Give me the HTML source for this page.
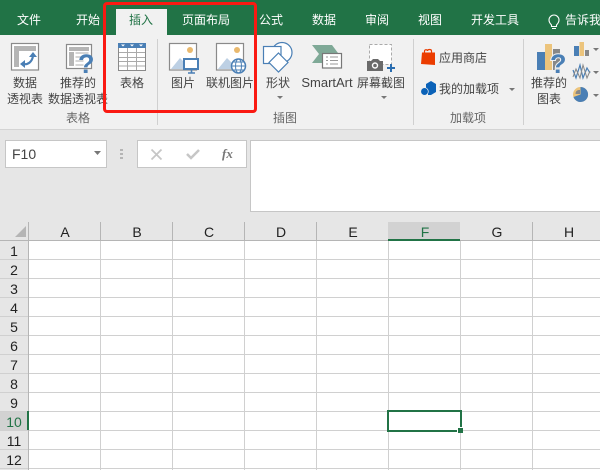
<!DOCTYPE html>
<html><head><meta charset="utf-8">
<style>
html,body{margin:0;padding:0}
body{width:600px;height:470px;overflow:hidden;position:relative;background:#fff;font-family:"Liberation Sans","Noto Sans CJK SC",sans-serif;color:#444}
.a{position:absolute}
.t{position:absolute;white-space:nowrap;font-size:12px;line-height:16px;text-align:center}
.tab{color:#fff;top:12px}
.c{color:#444}
.cap{color:#666}
svg{position:absolute;overflow:visible}
.h{position:absolute;top:224px;height:16px;line-height:16px;width:72px;text-align:center;font-size:14px;color:#222}
.r{position:absolute;left:0;width:28px;text-align:center;font-size:14px;line-height:18px;color:#222}
.q{font-family:"Liberation Sans",sans-serif;font-weight:bold;font-size:27px;fill:#4a7fb5}
</style></head><body>
<div class="a" style="left:0;top:0;width:600px;height:35px;background:#217346"></div>
<div class="a" style="left:0;top:35px;width:600px;height:94px;background:#f1f1f1"></div>
<div class="a" style="left:0;top:129px;width:600px;height:1px;background:#d4d4d4"></div>
<div class="a" style="left:0;top:130px;width:600px;height:110px;background:#e6e6e6"></div>
<div class="a" style="left:116px;top:9px;width:51px;height:26px;background:#f1f1f1"></div>

<div class="t tab" style="left:17px;width:24px">文件</div>
<div class="t tab" style="left:76px;width:24px">开始</div>
<div class="t" style="left:129px;width:24px;top:12px;color:#217346">插入</div>
<div class="t tab" style="left:182px;width:48px">页面布局</div>
<div class="t tab" style="left:259px;width:24px">公式</div>
<div class="t tab" style="left:312px;width:24px">数据</div>
<div class="t tab" style="left:365px;width:24px">审阅</div>
<div class="t tab" style="left:418px;width:24px">视图</div>
<div class="t tab" style="left:471px;width:48px">开发工具</div>
<div class="t tab" style="left:565px;width:48px;text-align:left">告诉我</div>
<svg style="left:548px;top:14px" width="12" height="17" viewBox="0 0 12 17"><path d="M3.500 11C2 9.500 1 8.300 1 6a5 5 0 0 1 10 0c0 2.300-1 3.500-2.500 5V12.500h-5zM4 14.500h4" fill="none" stroke="#fff" stroke-width="1.100"/></svg>

<!-- pivot -->
<svg style="left:11px;top:43px" width="28" height="28" viewBox="0 0 28 28"><rect x=".5" y=".5" width="27" height="26.500" fill="#fff" stroke="#8a8a8a" stroke-width="1.200"/><rect x="3" y="3" width="22" height="5" fill="#b5b5b5"/><rect x="3" y="8" width="5" height="16" fill="#b5b5b5"/><path d="M12 21c5 1 9-2 10-8" fill="none" stroke="#4a7fb5" stroke-width="2.200"/><path d="M18 14l4-5 4 5zM14 17v8l-5-4z" fill="#4a7fb5"/></svg>
<svg style="left:66px;top:44px" width="29" height="30" viewBox="0 0 29 30"><rect x=".5" y=".5" width="25" height="24" fill="#fff" stroke="#8a8a8a" stroke-width="1.200"/><rect x="3" y="3" width="20" height="4" fill="#b5b5b5"/><rect x="3" y="8" width="5" height="14" fill="#b5b5b5"/><path d="M9.500 9h13M9.500 13h10M9.500 17h8M9.500 21h8" stroke="#c8c8c8" stroke-width="1.500"/><text class="q" x="12" y="29">?</text></svg>
<div class="t c" style="left:0;width:50px;top:75px">数据</div>
<div class="t c" style="left:0;width:50px;top:91px">透视表</div>
<div class="t c" style="left:47px;width:62px;top:75px">推荐的</div>
<div class="t c" style="left:47px;width:62px;top:91px">数据透视表</div>
<div class="t cap" style="left:60px;width:36px;top:110px">表格</div>
<div class="a" style="left:157px;top:39px;width:1px;height:86px;background:#d0d0d0"></div>

<!-- table -->
<svg style="left:118px;top:43px" width="28" height="28" viewBox="0 0 28 28"><rect x=".5" y=".5" width="27" height="27" fill="#fff" stroke="#8a8a8a"/><rect x="0" y="0" width="28" height="5" fill="#4a7fb5"/><path d="M3 1.500l2 2 2-2zM12 1.500l2 2 2-2zM21 1.500l2 2 2-2z" fill="#fff"/><path d="M1 9.500h26M1 14.500h26M1 18.500h26M1 23h26M9.500 5v22M18.500 5v22" stroke="#aaa"/></svg>
<div class="t c" style="left:114px;width:36px;top:75px">表格</div>

<!-- picture -->
<svg style="left:169px;top:43px" width="31" height="31" viewBox="0 0 31 31"><rect x=".5" y=".5" width="27" height="26.500" fill="#fff" stroke="#8a8a8a" stroke-width="1.200"/><circle cx="21" cy="7" r="3" fill="#e9b96e"/><path d="M2 26l9-11 7 7 1 4z" fill="#bdd0e4"/><rect x="15" y="16" width="14" height="10" fill="#fff" stroke="#4a7fb5" stroke-width="2"/><path d="M19 30h7M22.500 27v3" stroke="#4a7fb5" stroke-width="1.600"/></svg>
<div class="t c" style="left:165px;width:36px;top:75px">图片</div>
<svg style="left:216px;top:43px" width="31" height="31" viewBox="0 0 31 31"><rect x=".5" y=".5" width="27" height="26.500" fill="#fff" stroke="#8a8a8a" stroke-width="1.200"/><circle cx="21" cy="7" r="3" fill="#e9b96e"/><path d="M2 26l9-11 7 7 1 4z" fill="#bdd0e4"/><circle cx="22.500" cy="23" r="7" fill="#fff" stroke="#4a7fb5" stroke-width="1.500"/><ellipse cx="22.500" cy="23" rx="3" ry="7" fill="none" stroke="#4a7fb5"/><path d="M15.500 23h14M17 19h11M17 27h11" stroke="#4a7fb5"/></svg>
<div class="t c" style="left:205px;width:50px;top:75px">联机图片</div>

<!-- shapes -->
<svg style="left:262px;top:42px" width="31" height="31" viewBox="0 0 31 31"><circle cx="20" cy="10.500" r="10" fill="#fff" stroke="#4a7fb5" stroke-width="1.200"/><rect x="1.500" y="4.500" width="17.500" height="17" fill="#fff" stroke="#4a7fb5" stroke-width="1.200"/><path d="M16.500 11l9.500 9.500-9.500 9.500L7 20.500z" fill="#fff" stroke="#4a7fb5" stroke-width="1.200"/></svg>
<div class="t c" style="left:265px;width:26px;top:75px">形状</div>
<svg style="left:277px;top:96px" width="6" height="3"><path d="M0 0h6L3 3z" fill="#777"/></svg>
<!-- smartart -->
<svg style="left:312px;top:45px" width="31" height="24" viewBox="0 0 31 24"><path d="M0 0h20l6 8H11v10H0l7-9z" fill="#7fa997"/><rect x="10.500" y="8.500" width="19" height="14.500" fill="#fff" stroke="#777" stroke-width="1.200"/><path d="M14 12h2M18 12h8M14 15.500h2M18 15.500h8M14 19h2M18 19h8" stroke="#999"/></svg>
<div class="t c" style="left:298px;width:58px;top:75px;font-size:13px;letter-spacing:0">SmartArt</div>
<!-- screenshot -->
<svg style="left:367px;top:44px" width="29" height="28" viewBox="0 0 29 28"><rect x="2.500" y=".5" width="22" height="20" fill="#fff" stroke="#aaa" stroke-dasharray="3 2"/><path d="M0 17h4l2-2h5l2 2h3v10H0z" fill="#6a6a6a"/><circle cx="8" cy="21.500" r="3.200" fill="#fff"/><circle cx="8" cy="21.500" r="1.800" fill="#6a6a6a"/><path d="M20 24h8M24 20v8" stroke="#2a6db0" stroke-width="2"/></svg>
<div class="t c" style="left:356px;width:50px;top:75px">屏幕截图</div>
<svg style="left:381px;top:96px" width="6" height="3"><path d="M0 0h6L3 3z" fill="#777"/></svg>
<div class="t cap" style="left:273px;width:24px;top:110px">插图</div>
<div class="a" style="left:413px;top:39px;width:1px;height:86px;background:#d0d0d0"></div>

<!-- addins -->
<svg style="left:421px;top:49px" width="14" height="16" viewBox="0 0 14 16"><path d="M1 3.500h13V16L0 15z" fill="#eb3c00"/><path d="M3.500 5V2C3.500.3 6.500.3 6.500 2M6.500 2c0-2 4-2 4 0v3" fill="none" stroke="#eb3c00" stroke-width="1.200"/></svg>
<div class="t c" style="left:439px;width:48px;top:50px">应用商店</div>
<svg style="left:421px;top:81px" width="15" height="15" viewBox="0 0 15 15"><path d="M5 3l5-3 5 3v8l-5 3H7V8H5z" fill="#0b62b8"/><circle cx="3.500" cy="10.500" r="3.800" fill="#0b62b8" stroke="#f1f1f1" stroke-width=".7"/></svg>
<div class="t c" style="left:439px;width:60px;top:81px">我的加载项</div>
<svg style="left:509px;top:88px" width="6" height="3"><path d="M0 0h6L3 3z" fill="#777"/></svg>
<div class="t cap" style="left:450px;width:36px;top:110px">加载项</div>
<div class="a" style="left:523px;top:39px;width:1px;height:86px;background:#d0d0d0"></div>

<!-- charts -->
<svg style="left:537px;top:44px" width="30" height="32" viewBox="0 0 30 32"><rect x="0" y="8" width="8" height="18" fill="#4a7fb5"/><rect x="8" y="0" width="7" height="26" fill="#ecc47c"/><rect x="16" y="5" width="7" height="21" fill="#888"/><text class="q" x="13" y="29" style="stroke:#f1f1f1;stroke-width:2;paint-order:stroke">?</text></svg>
<div class="t c" style="left:526px;width:46px;top:75px">推荐的</div>
<div class="t c" style="left:526px;width:46px;top:91px">图表</div>
<svg style="left:574px;top:42px" width="16" height="14" viewBox="0 0 16 14"><rect x="0" y="4" width="5" height="10" fill="#4a7fb5"/><rect x="5.500" y="0" width="4.500" height="14" fill="#ecc47c"/><rect x="11" y="8" width="4" height="6" fill="#888"/></svg>
<svg style="left:593px;top:48px" width="6" height="3"><path d="M0 0h6L3 3z" fill="#777"/></svg>
<svg style="left:573px;top:64px" width="17" height="16" viewBox="0 0 17 16"><path d="M0 6l3 8 4-13 3 13 4-10 3 5" fill="none" stroke="#4a7fb5" stroke-width="1.200"/><path d="M0 13l3-8 4 9 3-13 4 13 3-7" fill="none" stroke="#888"/></svg>
<svg style="left:593px;top:71px" width="6" height="3"><path d="M0 0h6L3 3z" fill="#777"/></svg>
<svg style="left:573px;top:87px" width="15" height="15" viewBox="0 0 15 15"><circle cx="7.500" cy="7.500" r="7.500" fill="#ecc47c"/><path d="M7.500 7.500V0a7.500 7.500 0 1 1-7 10z" fill="#4a7fb5"/><path d="M7 7V3H5.500a4 4 0 0 0-3 4z" fill="#888"/></svg>
<svg style="left:593px;top:94px" width="6" height="3"><path d="M0 0h6L3 3z" fill="#777"/></svg>

<!-- formula -->
<div class="a" style="left:5px;top:140px;width:100px;height:26px;background:#fff;border:1px solid #c6c6c6"></div>
<div class="t" style="left:12px;top:146px;font-size:14px;color:#444">F10</div>
<svg style="left:94px;top:151px" width="8" height="4"><path d="M0 0h7L3.500 4z" fill="#777"/></svg>
<svg style="left:120px;top:149px" width="4" height="11"><rect width="3" height="2" y="0" fill="#b5b5b5"/><rect width="3" height="2" y="4" fill="#b5b5b5"/><rect width="3" height="2" y="8" fill="#b5b5b5"/></svg>
<div class="a" style="left:137px;top:140px;width:108px;height:26px;background:#fff;border:1px solid #c6c6c6"></div>
<svg style="left:151px;top:149px" width="11" height="11"><path d="M.500.500l10 10M10.500.500l-10 10" stroke="#c6c6c6" stroke-width="1.800"/></svg>
<svg style="left:186px;top:149px" width="14" height="11"><path d="M1 5l4 4 8-8" fill="none" stroke="#c6c6c6" stroke-width="2.500"/></svg>
<div class="t" style="left:222px;top:146px;font-family:'Liberation Serif',serif;font-style:italic;font-weight:bold;font-size:13px;color:#777">fx</div>
<div class="a" style="left:250px;top:140px;width:350px;height:70px;background:#fff;border:1px solid #c6c6c6;border-right:0"></div>

<!-- grid -->
<div class="a" style="left:0;top:240px;width:600px;height:230px;background:#fff"></div>
<svg style="left:0;top:222px" width="600" height="248" viewBox="0 0 600 248" shape-rendering="crispEdges">
<rect x="0" y="18" width="28" height="230" fill="#e6e6e6"/>
<rect x="388" y="0" width="72" height="18" fill="#d2d2d2"/>
<rect x="0" y="189" width="28" height="19" fill="#d2d2d2"/>
<g fill="#d0d0d0">
<rect x="0" y="37" width="600" height="1"/><rect x="0" y="56" width="600" height="1"/><rect x="0" y="75" width="600" height="1"/><rect x="0" y="94" width="600" height="1"/><rect x="0" y="113" width="600" height="1"/><rect x="0" y="132" width="600" height="1"/><rect x="0" y="151" width="600" height="1"/><rect x="0" y="170" width="600" height="1"/><rect x="0" y="189" width="600" height="1"/><rect x="0" y="208" width="600" height="1"/><rect x="0" y="227" width="600" height="1"/><rect x="0" y="246" width="600" height="1"/>
<rect x="100" y="18" width="1" height="230"/><rect x="172" y="18" width="1" height="230"/><rect x="244" y="18" width="1" height="230"/><rect x="316" y="18" width="1" height="230"/><rect x="388" y="18" width="1" height="230"/><rect x="460" y="18" width="1" height="230"/><rect x="532" y="18" width="1" height="230"/>
</g>
<g fill="#b5b5b5">
<rect x="100" y="0" width="1" height="18"/><rect x="172" y="0" width="1" height="18"/><rect x="244" y="0" width="1" height="18"/><rect x="316" y="0" width="1" height="18"/><rect x="532" y="0" width="1" height="18"/>
<rect x="0" y="18" width="600" height="1"/>
<rect x="28" y="0" width="1" height="248"/>
</g>
<rect x="388" y="17" width="72" height="2" fill="#217346"/>
<rect x="27" y="189" width="2" height="19" fill="#217346"/>
</svg>
<svg style="left:15px;top:226px" width="12" height="12"><path d="M11 0v11H0z" fill="#b5b5b5"/></svg>
<div class="h" style="left:29px">A</div><div class="h" style="left:101px">B</div><div class="h" style="left:173px">C</div><div class="h" style="left:245px">D</div><div class="h" style="left:317px">E</div><div class="h" style="left:389px;color:#217346">F</div><div class="h" style="left:461px">G</div><div class="h" style="left:533px">H</div>
<div class="r" style="top:242px">1</div><div class="r" style="top:261px">2</div><div class="r" style="top:280px">3</div><div class="r" style="top:299px">4</div><div class="r" style="top:318px">5</div><div class="r" style="top:337px">6</div><div class="r" style="top:356px">7</div><div class="r" style="top:375px">8</div><div class="r" style="top:394px">9</div><div class="r" style="top:413px;color:#217346">10</div><div class="r" style="top:432px">11</div><div class="r" style="top:451px">12</div>

<!-- selection -->
<div class="a" style="left:387px;top:410px;width:71px;height:18px;border:2px solid #217346"></div>
<div class="a" style="left:457px;top:427px;width:6px;height:6px;background:#217346;border-left:1px solid #fff;border-top:1px solid #fff;box-sizing:border-box"></div>

<!-- red annotation -->
<div class="a" style="left:103px;top:2px;width:148px;height:105px;border:3px solid #fa1a12;border-radius:4px"></div>
</body></html>
